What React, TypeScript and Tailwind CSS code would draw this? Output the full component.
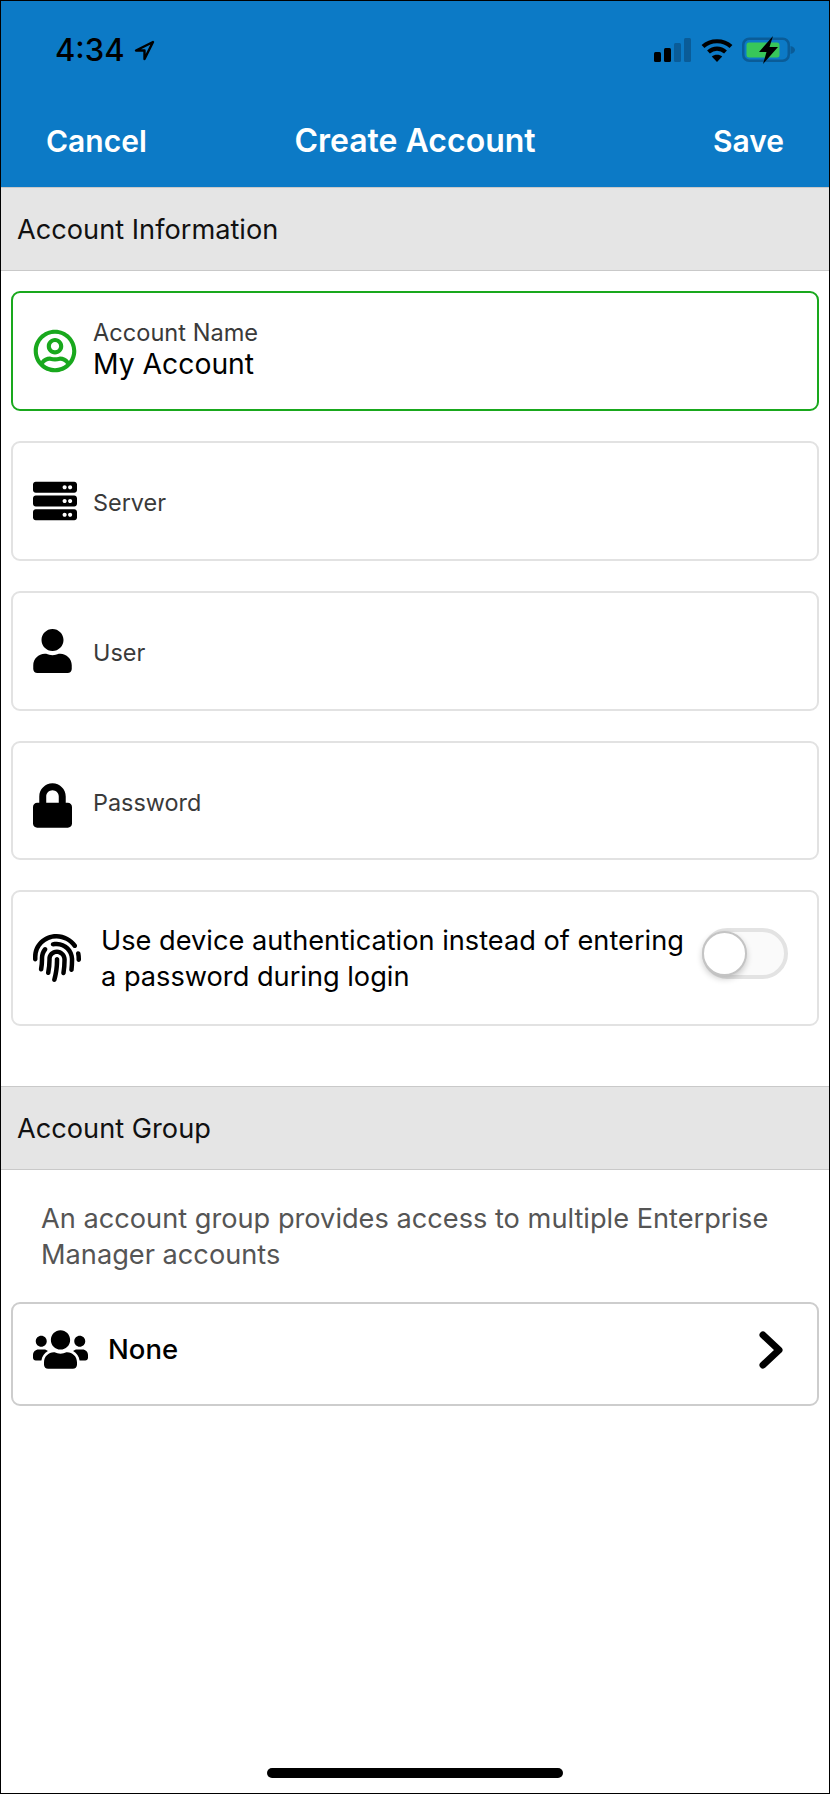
import type { ReactNode } from "react";
import { FaFingerprint, FaLock, FaRegUserCircle, FaServer, FaUser, FaUsers } from "react-icons/fa";

function SectionHeader({ title }: { title: string }) {
  return (
    <div className="flex h-[84px] items-center border-y border-[#c9c9c9] bg-[#e5e5e5] pl-[16px] pt-[2px] text-[27.2px] text-[#111]">
      {title}
    </div>
  );
}

function FieldCard({ label, icon, short }: { label: string; icon: ReactNode; short?: boolean }) {
  return (
    <div className={`flex items-center rounded-[9px] border-2 border-[#e2e2e2] pl-[20px] ${short ? "h-[119px] pt-[1px]" : "h-[120px]"}`}>
      <div className="flex w-[60px] shrink-0 items-center">{icon}</div>
      <span className="pt-[3px] text-[23.4px] text-[#3a3a3a]">{label}</span>
    </div>
  );
}

function StatusIcons() {
  return (
    <div className="flex items-center">
      {/* signal */}
      <svg width="38" height="24" viewBox="0 0 38 24">
        <rect x="0" y="14" width="7" height="10" rx="1.5" fill="#000" />
        <rect x="10" y="10" width="7" height="14" rx="1.5" fill="#000" />
        <rect x="20" y="5" width="7" height="19" rx="1.5" fill="#0a5c98" />
        <rect x="30" y="0" width="7" height="24" rx="1.5" fill="#0a5c98" />
      </svg>
      {/* wifi */}
      <svg className="ml-[9px]" width="32" height="24" viewBox="0 0 32 24" fill="none" stroke="#000" strokeWidth="4.2">
        <path d="M2 8.5C9.5 1.5 22.5 1.5 30 8.5" />
        <path d="M7.5 14C12.5 9.5 19.5 9.5 24.5 14" />
        <path d="M16 24L10.8 18.6C13.5 16.2 18.5 16.2 21.2 18.6Z" fill="#000" stroke="none" />
      </svg>
      {/* battery */}
      <svg className="ml-[9px]" width="54" height="28" viewBox="0 0 54 28">
        <rect x="1.25" y="2.75" width="45.5" height="22" rx="6" fill="none" stroke="#0a5c98" strokeWidth="2.5" />
        <rect x="4.5" y="6.5" width="33" height="15" rx="2.5" fill="#38c75a" />
        <path d="M48.5 10C52 11 53 12.5 53 14C53 15.5 52 17 48.5 18Z" fill="#0a5c98" />
        <path d="M31 0L17 16H24.5L21 28L36 11H27.5Z" fill="#000" />
      </svg>
    </div>
  );
}

export default function App() {
  return (
    <div className="flex h-[1794px] w-full flex-col border border-black bg-white font-['Inter',sans-serif]">
      <header className="h-[186px] shrink-0 bg-[#0c7ac6] px-[45px]">
        <div className="flex h-[98px] items-center justify-between">
          <div className="flex items-center gap-[9px] pl-[9px]">
            <span className="text-[31px] font-medium leading-[36px] text-black">4:34</span>
            <svg width="21" height="21" viewBox="0 0 21 21" fill="none" stroke="#000" strokeWidth="2.4" strokeLinejoin="round">
              <path d="M19 2L2 10.5H10.5V19Z" />
            </svg>
          </div>
          <div className="-mr-[12px]">
            <StatusIcons />
          </div>
        </div>
        <nav className="mt-[22px] grid grid-cols-[1fr_auto_1fr] items-center text-[30px] font-semibold leading-[40px] text-white">
          <span>Cancel</span>
          <span className="whitespace-nowrap text-center text-[32px]">Create Account</span>
          <span className="text-right">Save</span>
        </nav>
      </header>

      <SectionHeader title="Account Information" />

      <div className="flex flex-col gap-[30px] pl-[10px] pr-[10px] pt-[20px]">
        <div className="flex h-[120px] items-center rounded-[9px] border-2 border-[#19a81d] pl-[20px]">
          <div className="flex w-[60px] shrink-0 items-center">
            <FaRegUserCircle size={44} color="#19a81d" />
          </div>
          <div className="flex flex-col pb-[2px]">
            <span className="text-[23.6px] leading-[28px] text-[#3a3a3a]">Account Name</span>
            <span className="text-[28.3px] leading-[34px] text-black">My Account</span>
          </div>
        </div>
        <FieldCard label="Server" icon={<FaServer size={44} color="#000" />} />
        <FieldCard label="User" icon={<FaUser color="#000" className="h-[44px] w-[39px]" />} />
        <FieldCard short label="Password" icon={<FaLock color="#000" className="mt-[9px] h-[45px] w-[39px]" />} />

        <div className="flex h-[136px] items-center rounded-[9px] border-2 border-[#e2e2e2] pl-[20px] pr-[29px]">
          <FaFingerprint size={48} color="#000" className="shrink-0" />
          <p className="ml-[20px] flex-1 pt-[1px] text-[27.2px] leading-[36px] text-black">
            Use device authentication instead of entering a password during login
          </p>
          <div className="relative mb-[10px] ml-[12px] h-[51px] w-[86px] shrink-0 rounded-full border-[4px] border-[#e3e3e3] bg-[#fafafa]">
            <div className="absolute -left-[4px] -top-[1px] h-[45px] w-[45px] rounded-full border-2 border-[#c4c4c4] bg-white shadow-[0_3px_6px_rgba(0,0,0,0.2)]" />
          </div>
        </div>
      </div>

      <div className="mt-[60px]">
        <SectionHeader title="Account Group" />
      </div>

      <p className="pl-[40px] pr-[30px] pt-[31px] text-[27.2px] leading-[36px] text-[#555]">
        An account group provides access to multiple Enterprise Manager accounts
      </p>

      <div className="mx-[10px] mt-[29px] flex h-[104px] items-center justify-between rounded-[9px] border-2 border-[#cdcdcd] pb-[9px] pl-[20px] pr-[34px]">
        <div className="flex items-center">
          <FaUsers size={55} color="#000" />
          <span className="ml-[20px] text-[27.5px] font-medium text-black">None</span>
        </div>
        <svg width="24" height="38" viewBox="0 0 24 38" fill="none" stroke="#000" strokeWidth="7" strokeLinecap="round" strokeLinejoin="round">
          <path d="M4 4L20 19L4 34" />
        </svg>
      </div>

      <div className="mt-auto flex justify-center pb-[15px]">
        <div className="h-[10px] w-[296px] rounded-full bg-black" />
      </div>
    </div>
  );
}
